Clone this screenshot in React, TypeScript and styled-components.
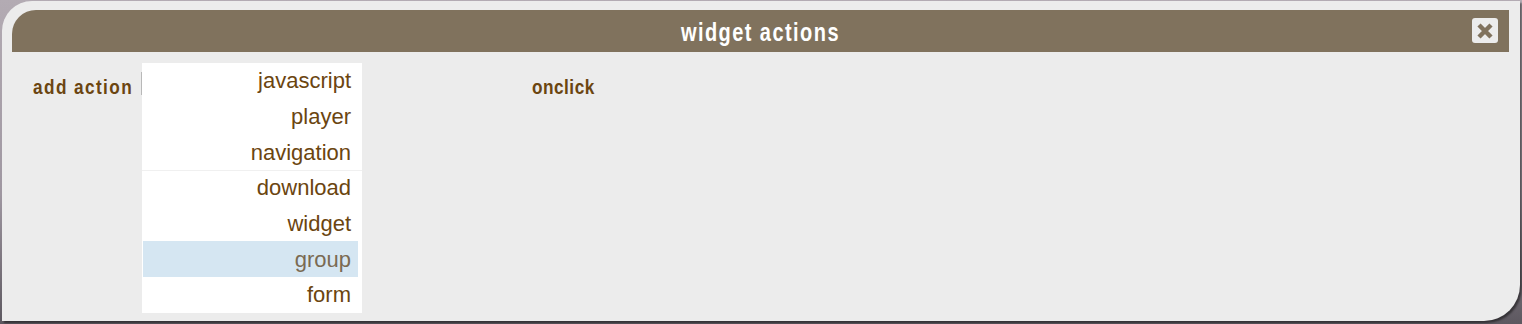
import React from "react";
import styled, { createGlobalStyle } from "styled-components";

const Global = createGlobalStyle`
  html, body { margin: 0; padding: 0; }
  body {
    width: 1522px;
    height: 324px;
    overflow: hidden;
    background: linear-gradient(180deg, #b3abb3 0%, #9f97a1 60%, #5d5860 100%);
  }
`;

const Panel = styled.div`
  box-sizing: border-box;
  margin: 1px 0 0 2px;
  width: 1518px;
  height: 320px;
  background: #ececec;
  border-top-left-radius: 30px;
  border-bottom-right-radius: 36px;
  box-shadow: 2px 2px 2px rgba(0, 0, 0, 0.45);
  padding: 9px 11px 0 10px;
  display: flex;
  flex-direction: column;
`;

const Header = styled.div`
  position: relative;
  height: 42px;
  background: #80725d;
  border-top-left-radius: 24px;
  display: flex;
  align-items: center;
  justify-content: center;
`;

const Title = styled.div`
  font-family: "Liberation Sans", Arial, sans-serif;
  font-weight: bold;
  font-size: 25px;
  letter-spacing: 1.8px;
  color: #ffffff;
  margin-top: 2px;
  transform: scaleX(0.8);
  transform-origin: center;
`;

const CloseButton = styled.div`
  position: absolute;
  right: 11px;
  top: 8px;
  width: 26px;
  height: 25px;
  border-radius: 3px;
  background: #ececec;
  display: flex;
  align-items: center;
  justify-content: center;
`;

const Body = styled.div`
  display: flex;
  align-items: flex-start;
  padding: 11px 0 0 21px;
`;

const Label = styled.div<{ $width: number; $gap?: number }>`
  flex: none;
  width: ${(p) => p.$width}px;
  margin-top: 12px;
  margin-left: ${(p) => p.$gap ?? 0}px;
  white-space: nowrap;
`;

const LabelText = styled.span<{ $spacing?: number }>`
  display: inline-block;
  font-family: "Liberation Sans", Arial, sans-serif;
  font-weight: bold;
  font-size: 21px;
  letter-spacing: ${(p) => p.$spacing ?? 1.5}px;
  color: #6b4510;
  transform: scaleX(0.82);
  transform-origin: left center;
`;

const SelectEdge = styled.div`
  flex: none;
  width: 1px;
  height: 23px;
  background: #b8b8b8;
  margin-top: 9px;
`;

const List = styled.div`
  flex: none;
  width: 220px;
  background: #ffffff;
  display: flex;
  flex-direction: column;
`;

const Item = styled.div<{ $selected?: boolean; $separator?: boolean }>`
  box-sizing: border-box;
  height: 35.7px;
  display: flex;
  align-items: center;
  justify-content: flex-end;
  padding-right: ${(p) => (p.$selected ? 7 : 11)}px;
  margin: ${(p) => (p.$selected ? "0 4px 0 1px" : "0")};
  background: ${(p) => (p.$selected ? "#d5e6f2" : "transparent")};
  border-top: 1px solid ${(p) => (p.$separator ? "#f0f0f0" : "transparent")};
  font-family: "Liberation Sans", Arial, sans-serif;
  font-size: 22px;
  color: ${(p) => (p.$selected ? "#7a6a52" : "#6b4510")};
`;

const items = ["javascript", "player", "navigation", "download", "widget", "group", "form"];

export default function App() {
  return (
    <>
      <Global />
      <Panel>
        <Header>
          <Title>widget actions</Title>
          <CloseButton>
            <svg width="20" height="20" viewBox="0 0 20 20">
              <path d="M4 4 L16 16 M16 4 L4 16" stroke="#80725d" strokeWidth="4.5" strokeLinecap="butt" />
            </svg>
          </CloseButton>
        </Header>
        <Body>
          <Label $width={108}>
            <LabelText $spacing={1.7}>add action</LabelText>
          </Label>
          <SelectEdge />
          <List>
            {items.map((it) => (
              <Item key={it} $selected={it === "group"} $separator={it === "download"}>
                {it}
              </Item>
            ))}
          </List>
          <Label $width={120} $gap={170}>
            <LabelText $spacing={0.6}>onclick</LabelText>
          </Label>
        </Body>
      </Panel>
    </>
  );
}
